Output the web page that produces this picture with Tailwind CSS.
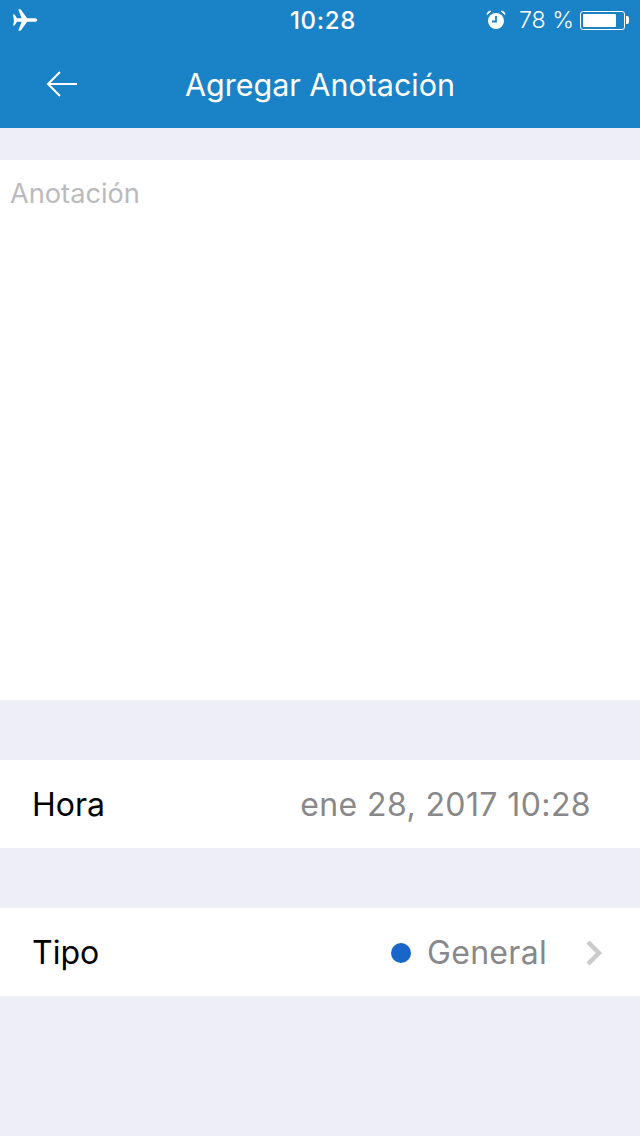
<!DOCTYPE html>
<html lang="es">
<head>
<meta charset="utf-8">
<script src="https://cdn.jsdelivr.net/npm/@tailwindcss/browser@4"></script>
</head>
<body class="m-0">
<div class="w-[640px] h-[1136px] flex flex-col bg-[#eeeef8] font-['Inter','Liberation_Sans',sans-serif] overflow-hidden">
  <header class="h-[128px] bg-[#1a82c6] text-white flex flex-col shrink-0">
    <div class="h-[40px] flex items-center justify-between pl-[12px] pr-[15px]">
      <svg class="w-[26px] h-[24px]" viewBox="0 0 26 24" fill="#fff"><path d="M1 6.500h1.600L5 10.200h4.600L6.300 1.200h2.300l6.600 9h7.300c1.700 0 2.800.8 2.800 1.800s-1.100 1.800-2.800 1.800h-7.300l-6.600 9H6.300l3.300-9H5l-2.400 3.700H1l1-4.500z"/></svg>
      <div class="absolute left-[3px] w-[640px] text-center text-[24px] leading-[41px] font-medium tracking-[0.700px]">10:28</div>
      <div class="flex items-center">
        <svg class="w-[20px] h-[20px] mr-[13px]" viewBox="0 0 20 20" fill="#fff"><circle cx="10" cy="11" r="8"/><path d="M10 6v5.500H6" fill="none" stroke="#1a82c6" stroke-width="1.800"/><path d="M1 4.500A3.500 3.500 0 0 1 5 1.200L1 4.500zM19 4.500a3.500 3.500 0 0 0-4-3.300L19 4.500z" stroke="#fff" stroke-width="1"/></svg>
        <span class="text-[23.200px] leading-[41px] font-light mr-[6px]">78 %</span>
        <div class="w-[45px] h-[19px] border border-white rounded-[3px] p-[2px] relative">
          <div class="w-[33px] h-full bg-white rounded-[1px]"></div>
          <div class="absolute left-[45px] top-[4px] w-[3px] h-[8px] bg-white rounded-r-[2px]"></div>
        </div>
      </div>
    </div>
    <div class="h-[88px] relative flex items-center justify-center pt-[1px]">
      <svg class="absolute left-[45px] top-[30px] w-[33px] h-[28px]" viewBox="0 0 33 28" fill="none" stroke="#fff" stroke-width="2"><path d="M32 14H3M15 2 3 14l12 12"/></svg>
      <h1 class="text-[30.500px] font-normal leading-[40px]">Agregar Anotación</h1>
    </div>
  </header>
  <section class="mt-[32px] h-[540px] bg-white px-[10px] py-[16px] shrink-0">
    <p class="text-[27.200px] leading-[36px] text-[#bababd]">Anotación</p>
  </section>
  <div class="mt-[60px] h-[88px] bg-white flex items-center justify-between pl-[32px] pr-[49px] pt-[1px] shrink-0">
    <span class="text-[32px] text-black">Hora</span>
    <span class="text-[32px] tracking-[0.400px] text-[#88888a]">ene 28, 2017 10:28</span>
  </div>
  <div class="mt-[60px] h-[88px] bg-white flex items-center pl-[32px] pr-[37px] pt-[1px] shrink-0">
    <span class="text-[32px] text-black">Tipo</span>
    <span class="ml-auto w-[20px] h-[20px] rounded-full bg-[#1766c8]"></span>
    <span class="ml-[16px] text-[32px] tracking-[0.300px] text-[#88888a]">General</span>
    <svg class="ml-[38px] w-[18px] h-[26px]" viewBox="0 0 18 26" fill="none" stroke="#cbcbcd" stroke-width="4.500"><path d="M3 2l11 11L3 24"/></svg>
  </div>
</div>
</body>
</html>
